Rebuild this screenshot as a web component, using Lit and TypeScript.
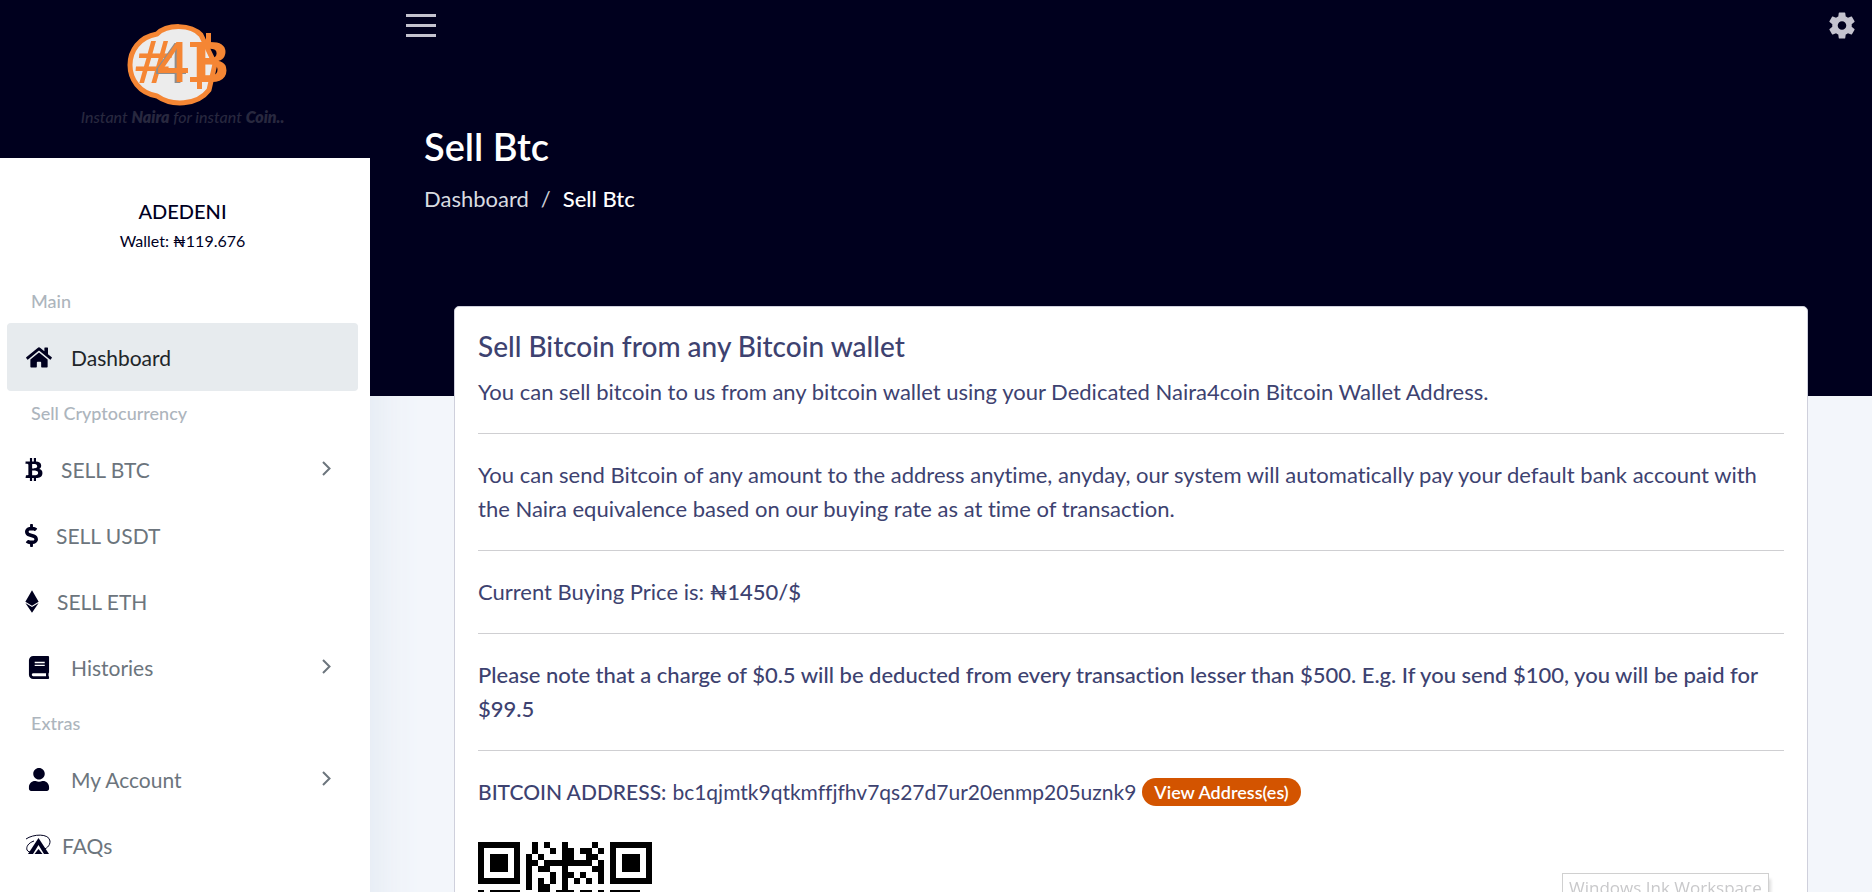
import { LitElement, html, svg, css } from "lit";
import { customElement, state } from "lit/decorators.js";
import { classMap } from "lit/directives/class-map.js";

/* Icon geometry, on the Font Awesome 512-unit grid. */
const icons = {
  home: { w: 576, width: 28, d: "M280.37 148.26L96 300.11V464a16 16 0 0 0 16 16l112.06-.29a16 16 0 0 0 15.92-16V368a16 16 0 0 1 16-16h64a16 16 0 0 1 16 16v95.64a16 16 0 0 0 16 16.05L464 480a16 16 0 0 0 16-16V300L295.67 148.26a12.19 12.19 0 0 0-15.3 0zM571.6 251.47L488 182.56V44.05a12 12 0 0 0-12-12h-56a12 12 0 0 0-12 12v72.61L318.47 43a48 48 0 0 0-61 0L4.34 251.47a12 12 0 0 0-1.6 16.9l25.5 31A12 12 0 0 0 45.15 301l235.22-193.74a12.19 12.19 0 0 1 15.3 0L530.9 301a12 12 0 0 0 16.9-1.6l25.5-31a12 12 0 0 0-1.7-16.93z" },
  book: { w: 448, width: 28, d: "M448 360V24c0-13.3-10.7-24-24-24H96C43 0 0 43 0 96v320c0 53 43 96 96 96h328c13.3 0 24-10.7 24-24v-16c0-7.5-3.5-14.3-8.9-18.7-4.2-15.4-4.2-59.3 0-74.7 5.4-4.3 8.9-11.1 8.9-18.6zM128 134c0-3.300 2.700-6 6-6h212c3.300 0 6 2.700 6 6v20c0 3.300-2.700 6-6 6H134c-3.300 0-6-2.700-6-6v-20zm0 64c0-3.300 2.700-6 6-6h212c3.300 0 6 2.700 6 6v20c0 3.300-2.700 6-6 6H134c-3.300 0-6-2.700-6-6v-20zm253.400 250H96c-17.700 0-32-14.300-32-32 0-17.600 14.400-32 32-32h285.400c-1.900 17.100-1.900 46.900 0 64z" },
  user: { w: 448, width: 28, d: "M224 256c70.700 0 128-57.300 128-128S294.700 0 224 0 96 57.300 96 128s57.300 128 128 128zm89.600 32h-16.700c-22.200 10.200-46.900 16-72.900 16s-50.600-5.800-72.900-16h-16.700C60.200 288 0 348.200 0 422.400V464c0 26.500 21.500 48 48 48h352c26.500 0 48-21.500 48-48v-41.600c0-74.200-60.200-134.400-134.400-134.400z" },
  btc: { w: 384, width: 18, d: "M310.204 242.638c27.730-14.180 45.377-39.390 41.280-81.300-5.358-57.351-52.458-76.573-114.850-81.929V0h-48.528v77.203c-12.605 0-25.525.315-38.444.63V0h-48.530v79.409c-17.842.539-38.622.276-97.370 0v51.678c38.314-.678 58.417-3.140 63.023 21.427v217.429c-2.925 19.492-18.524 16.685-53.255 16.071L3.765 443.680c88.481 0 97.370.315 97.370.315V512h48.530v-67.060c13.234.315 26.154.315 38.444.315V512h48.528v-68.005c81.299-4.412 135.647-24.894 142.895-101.467 5.671-61.446-23.320-88.862-69.328-99.890zM150.608 134.553c27.415 0 113.126-8.507 113.126 48.528 0 54.515-85.710 48.212-113.126 48.212v-96.740zm0 251.776V279.821c32.772 0 133.127-9.138 133.127 53.255-.001 60.186-100.355 53.253-133.127 53.253z" },
  usdt: { w: 288, width: 13, d: "M209.200 233.400l-108-31.600C88.700 198.200 80 186.500 80 173.500c0-16.300 13.200-29.500 29.500-29.500h66.300c12.200 0 24.200 3.700 34.200 10.500 6.100 4.100 14.300 3.100 19.500-2l34.800-34c7.100-6.900 6.100-18.400-1.800-24.500C238 74.800 207.400 64.100 176 64V16c0-8.800-7.200-16-16-16h-32c-8.800 0-16 7.200-16 16v48h-2.500C45.800 64-5.400 118.700.5 183.600c4.200 46.100 39.400 83.600 83.800 96.600l102.500 30c12.500 3.700 21.200 15.300 21.200 28.300 0 16.300-13.200 29.500-29.500 29.500h-66.300C100 368 88 364.300 78 357.500c-6.100-4.100-14.300-3.100-19.500 2l-34.800 34c-7.100 6.900-6.100 18.400 1.800 24.500 24.500 19.200 55.100 29.900 86.500 30v48c0 8.800 7.200 16 16 16h32c8.800 0 16-7.200 16-16v-48.200c46.600-.9 90.300-28.600 105.700-72.700 21.500-61.600-14.600-124.800-72.500-141.700z" },
  eth: { w: 320, width: 14, d: "M311.900 260.800L160 353.600 8 260.800 160 0l151.900 260.800zM160 383.400L8 290.600 160 512l152-221.400-152 92.800z" },
} as const;

type IconName = keyof typeof icons | "faq";
interface Item { label: string; icon: IconName; active?: boolean; more?: boolean }

const menu: { title: string; items: Item[] }[] = [
  { title: "Main", items: [{ label: "Dashboard", icon: "home", active: true }] },
  {
    title: "Sell Cryptocurrency",
    items: [
      { label: "SELL BTC", icon: "btc", more: true },
      { label: "SELL USDT", icon: "usdt" },
      { label: "SELL ETH", icon: "eth" },
      { label: "Histories", icon: "book", more: true },
    ],
  },
  {
    title: "Extras",
    items: [
      { label: "My Account", icon: "user", more: true },
      { label: "FAQs", icon: "faq" },
    ],
  },
];

function icon(name: IconName) {
  if (name === "faq") {
    return html`<svg class="glyph" width="26" height="24" viewBox="0 0 26 24" aria-hidden="true">
      <path d="M1 6C8 1 24 0 25 8c.3 5-4 8-8 9" fill="none" stroke="currentColor" stroke-width="1" />
      <path d="M9 8C3 10 1 14 2 17c1 2 3 2 5 2" fill="none" stroke="currentColor" stroke-width="1" />
      <path d="M3 21 13.500 5 24 21h-5l-5.500-9L8 21z" fill="currentColor" />
      <path d="M9.500 21l4-5 4 5z" fill="currentColor" />
    </svg>`;
  }
  const i = icons[name];
  return html`<svg class="glyph" width=${i.width} height="23" viewBox="0 0 ${i.w} 512" aria-hidden="true">
    <path d=${i.d} fill="currentColor" fill-rule="evenodd" />
  </svg>`;
}

/* Top rows of the address code; # is a dark module. */
const qrRows = [
  "#######..#.#..#....#..#######",
  "#.....#..#..#.##.##.#.#.....#",
  "#.###.#.#.#...##..##..#.###.#",
  "#.###.#.##.########.#.#.###.#",
  "#.###.#.#.##..#....##.#.###.#",
  "#.....#.#...#.##.#..#.#.....#",
  "#######.#.#.#.#.#.#.#.#######",
  "........#.##..#..............",
  "#.#####...##.###.##.#.#####..",
  "..##.#.##.#..#.##.#..##.#.#.#",
];

@customElement("app-sidebar")
class AppSidebar extends LitElement {
  static styles = css`
    :host { display: block; background: #fff; color: #00001f; }
    .brand { height: 158px; box-sizing: border-box; padding: 20px 5px 0 0; background: #00001e; }
    .brand a { display: flex; flex-direction: column; align-items: center; text-decoration: none; }
    .tagline { margin: 0; font-size: 16px; line-height: 18px; font-style: italic; font-weight: 500; color: #28283f; }
    .tagline b { font-weight: 800; }
    .mark { font-family: "Noto Sans", "Open Sans", sans-serif; }
    .four { filter: drop-shadow(-2px 1px 0 #8d8d8d); }
    .profile { padding: 36px 5px 24px 0; text-align: center; }
    .name { margin: 0; font-size: 20px; line-height: 34px; font-weight: 500; }
    .wallet { margin: 0; font-size: 16px; line-height: 26px; }
    nav { padding: 0 12px 0 7px; }
    h2 { margin: 0; padding-left: 24px; font-size: 18px; line-height: 46px; font-weight: 500; color: #adb5bd; }
    ul { margin: 0; padding: 0; list-style: none; }
    .item { display: flex; align-items: center; gap: 18px; height: 66px; padding: 0 27px 0 18px; border-radius: 4px; font-size: 21px; color: #6c757d; text-decoration: none; }
    .item.snug { gap: 11px; }
    .item.active { background: #e7ebee; color: #212529; box-shadow: 0 1px #e7ebee, 0 -1px #e7ebee; }
    .glyph { color: #00001f; flex: none; }
    .label { flex: 1; }
  `;

  render() {
    return html`
      <header class="brand">
        <a href="#home" aria-label="Home">
          <svg class="mark" width="124" height="88" viewBox="0 0 124 88" aria-hidden="true">
            <path d="M36 14C46 4 70 4 80 15L94 44 88 70C76 86 50 86 36 76 0 70 0 20 36 14Z" fill="#ececec" stroke="#f58634" stroke-width="5" stroke-linejoin="round" />
            <text x="13" y="63" font-size="58" font-weight="500" font-style="italic" fill="#f58634">#</text>
            <text class="four" x="36" y="62" font-size="56" font-weight="500" fill="#f58634">4</text>
            <text x="71" y="62" font-size="56" font-weight="700" fill="#f58634">B</text>
            <path d="M69 22h12v5H69zM69 57h12v5H69zM85 13h5v11h-5zM76 60h5v9h-5z" fill="#f58634" />
          </svg>
          <p class="tagline">Instant <b>Naira</b> for instant <b>Coin..</b></p>
        </a>
      </header>
      <section class="profile">
        <p class="name">ADEDENI</p>
        <p class="wallet">Wallet: ₦119.676</p>
      </section>
      <nav aria-label="Sidebar">
        ${menu.map((group) => html`
          <h2>${group.title}</h2>
          <ul>
            ${group.items.map((item) => html`
              <li>
                <a href="#" class=${classMap({ item: true, active: !!item.active, snug: item.icon === "faq" })}>
                  ${icon(item.icon)}
                  <span class="label">${item.label}</span>
                  ${item.more ? html`<svg width="9" height="16" viewBox="0 0 9 16" aria-hidden="true"><path d="M1 1l6.500 6.500L1 14" fill="none" stroke="#6c757d" stroke-width="2" /></svg>` : ""}
                </a>
              </li>`)}
          </ul>`)}
      </nav>
    `;
  }
}

@customElement("app-root")
class AppRoot extends LitElement {
  static styles = css`
    :host { display: grid; grid-template-columns: 370px minmax(0, 1fr); height: 100vh; overflow: hidden; background: #f3f6fb; font-family: Lato, "Open Sans", sans-serif; font-variant-ligatures: none; color: #00001f; }
    app-sidebar { box-shadow: 0 0 48px #dde5ef; }
    .banner { height: 396px; box-sizing: border-box; background: #00001e; color: #fff; }
    .topbar { display: flex; justify-content: space-between; align-items: center; height: 51px; padding: 0 17px 0 36px; }
    .icon-button { display: flex; padding: 0; border: 0; background: none; color: #c4c3cf; cursor: pointer; }
    .heading { padding: 69px 54px 0; }
    h1 { margin: 0; font-size: 38px; line-height: 52px; font-weight: 600; }
    ol { display: flex; gap: 12px; margin: 10px 0 0; padding: 0; list-style: none; font-size: 22px; line-height: 34px; }
    ol a { color: #d9dce1; text-decoration: none; }
    .slash { color: #c9ccd4; padding-right: 12px; }
    .current { font-weight: 500; }
    .card { margin: -90px 64px 0 84px; padding: 23px; background: #fff; border: 1px solid #cfd0dc; border-radius: 5px; color: #3d4270; font-size: 22px; line-height: 34px; }
    .card h2 { margin: 0 0 13px; font-size: 28px; line-height: 32px; font-weight: 500; }
    .card p { margin: 0; }
    hr { margin: 24px 0; border: 0; border-top: 1px solid #cfcfd2; }
    strong { font-weight: 500; }
    .address { display: flex; align-items: center; gap: 6px; font-size: 21px; }
    .badge { padding: 0 12px; border-radius: 14px; background: #d35400; color: #fff; font-size: 18px; line-height: 28px; font-weight: 600; text-decoration: none; }
    .qr { display: block; margin-top: 33px; }
    .tooltip { position: fixed; left: 1562px; top: 873px; padding: 0 6px; border: 1px solid #d0d0d0; background: #fff; box-shadow: 3px 5px 3px -1px #ddd; color: #c9c9cb; font-family: "Open Sans", sans-serif; font-size: 17px; line-height: 28px; white-space: nowrap; }
  `;

  @state() private menuOpen = true;

  render() {
    return html`
      <app-sidebar ?hidden=${!this.menuOpen}></app-sidebar>
      <main>
        <header class="banner">
          <div class="topbar">
            <button class="icon-button" aria-label="Toggle menu" @click=${() => (this.menuOpen = !this.menuOpen)}>
              <svg width="30" height="23" viewBox="0 0 30 23"><path d="M0 0h30v3H0zM0 10h30v3H0zM0 20h30v3H0z" fill="currentColor" /></svg>
            </button>
            <button class="icon-button" aria-label="Settings">
              <svg width="26" height="27" viewBox="2 2 20 20"><path d="M19.430 12.980c.04-.32.07-.64.07-.98s-.03-.66-.07-.98l2.110-1.650c.19-.15.24-.42.12-.64l-2-3.460c-.12-.22-.39-.3-.61-.22l-2.490 1c-.52-.4-1.080-.73-1.690-.98l-.38-2.650C14.460 2.180 14.250 2 14 2h-4c-.25 0-.46.18-.49.42l-.38 2.650c-.61.25-1.170.59-1.690.98l-2.490-1c-.23-.09-.49 0-.61.22l-2 3.460c-.13.22-.07.49.12.64l2.110 1.650c-.04.32-.07.65-.07.98s.03.66.07.98l-2.110 1.650c-.19.15-.24.42-.12.64l2 3.460c.12.22.39.3.61.22l2.490-1c.52.4 1.080.73 1.690.98l.38 2.650c.03.24.24.42.49.42h4c.25 0 .46-.18.49-.42l.38-2.650c.61-.25 1.170-.59 1.690-.98l2.490 1c.23.09.49 0 .61-.22l2-3.460c.12-.22.07-.49-.12-.64l-2.110-1.650zM12 15.300a3.300 3.300 0 1 1 0-6.600 3.300 3.300 0 0 1 0 6.600z" fill="currentColor" /></svg>
            </button>
          </div>
          <div class="heading">
            <h1>Sell Btc</h1>
            <ol>
              <li><a href="#dashboard">Dashboard</a></li>
              <li><span class="slash">/</span><span class="current">Sell Btc</span></li>
            </ol>
          </div>
        </header>
        <section class="card">
          <h2>Sell Bitcoin from any Bitcoin wallet</h2>
          <p>You can sell bitcoin to us from any bitcoin wallet using your Dedicated Naira4coin Bitcoin Wallet Address.</p>
          <hr />
          <p>You can send Bitcoin of any amount to the address anytime, anyday, our system will automatically pay your default bank account with the Naira equivalence based on our buying rate as at time of transaction.</p>
          <hr />
          <p>Current Buying Price is: <strong>₦1450/$</strong></p>
          <hr />
          <p><strong>Please note that a charge of $0.5 will be deducted from every transaction lesser than $500. E.g. If you send $100, you will be paid for $99.5</strong></p>
          <hr />
          <div class="address">
            <strong>BITCOIN ADDRESS:</strong>
            <span>bc1qjmtk9qtkmffjfhv7qs27d7ur20enmp205uznk9</span>
            <a class="badge" href="#addresses">View Address(es)</a>
          </div>
          <svg class="qr" width="174" height="174" viewBox="0 0 29 29" shape-rendering="crispEdges" role="img" aria-label="Address QR code">
            ${qrRows.map((row, y) => [...row].map((c, x) => (c === "#" ? svg`<rect x=${x} y=${y} width="1" height="1" />` : "")))}
          </svg>
        </section>
      </main>
      <div class="tooltip" role="tooltip">Windows Ink Workspace</div>
    `;
  }
}
